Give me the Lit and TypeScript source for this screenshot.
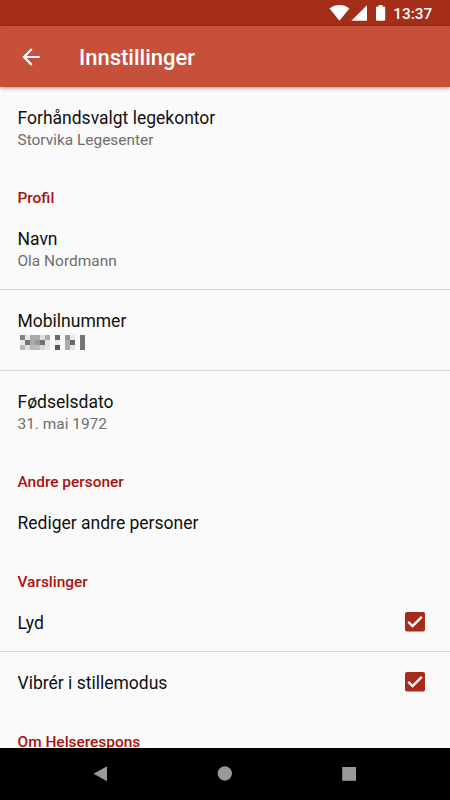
import { LitElement, html, css, svg, nothing } from "lit";
import { customElement } from "lit/decorators.js";

interface Item {
  kind: "row" | "category";
  title: string;
  summary?: string;
  checked?: boolean;
  masked?: boolean;
  divider?: boolean;
}

const items: Item[] = [
  { kind: "row", title: "Forhåndsvalgt legekontor", summary: "Storvika Legesenter" },
  { kind: "category", title: "Profil" },
  { kind: "row", title: "Navn", summary: "Ola Nordmann", divider: true },
  { kind: "row", title: "Mobilnummer", masked: true, divider: true },
  { kind: "row", title: "Fødselsdato", summary: "31. mai 1972" },
  { kind: "category", title: "Andre personer" },
  { kind: "row", title: "Rediger andre personer" },
  { kind: "category", title: "Varslinger" },
  { kind: "row", title: "Lyd", checked: true, divider: true },
  { kind: "row", title: "Vibrér i stillemodus", checked: true },
  { kind: "category", title: "Om Helserespons" },
];

// Grey levels of the masked phone number, three rows of 5px cells; -1 is empty.
const mosaic = [
  [132, 232, 168, 168, 222, 172, -1, 108, -1, 150, 232, -1, 116],
  [232, 116, 172, 150, 116, 228, -1, 236, -1, 172, 104, -1, 116],
  [184, 222, 184, 190, 216, 228, -1, 88, -1, 172, 228, -1, 116],
];

@customElement("app-root")
export class AppRoot extends LitElement {
  static styles = css`
    :host {
      display: flex;
      flex-direction: column;
      height: 800px;
      overflow: hidden;
      background: #fafafa;
      font-family: Roboto, sans-serif;
      -webkit-font-smoothing: antialiased;
    }
    svg {
      display: block;
    }
    .status {
      flex: none;
      height: 26px;
      background: #a52e1b;
    }
    .bar {
      flex: none;
      display: flex;
      align-items: center;
      height: 61px;
      background: #c7503b;
      color: #fff;
      box-shadow: 0 1px 4px rgba(0, 0, 0, 0.42);
      z-index: 1;
    }
    .back {
      margin-left: 18px;
    }
    .heading {
      margin: 2px 0 0 35px;
      font-size: 22px;
      line-height: 26px;
      font-weight: 500;
    }
    .list {
      flex: 1;
      min-height: 0;
      overflow: hidden;
      padding-top: 1px;
    }
    .row {
      box-sizing: border-box;
      display: flex;
      justify-content: space-between;
      height: 60px;
      padding: 20px 25px 0 17.5px;
    }
    .tall {
      height: 80px;
      padding-top: 19px;
    }
    .divider {
      border-bottom: 1px solid #d9d9d9;
    }
    .tall.divider {
      height: 81px;
    }
    .divider + .tall {
      padding-top: 20px;
    }
    .divider + .tall:not(.divider) {
      height: 81.2px;
    }
    .title {
      font-size: 17.5px;
      line-height: 22px;
      color: #111;
    }
    .summary {
      font-size: 15.45px;
      line-height: 23px;
      color: #6e6e6e;
    }
    .mosaic {
      margin: 3.4px 0 0 2.5px;
    }
    .category {
      box-sizing: border-box;
      height: 40.6px;
      padding: 20px 17.5px 0;
      font-size: 15.45px;
      line-height: 20px;
      font-weight: 500;
      color: #a6150f;
    }
    .row:not(.tall) + .category {
      height: 39.8px;
    }
    .nav {
      flex: none;
      height: 52px;
      background: #000;
    }
  `;

  private renderItem(item: Item) {
    if (item.kind === "category") {
      return html`<div class="category">${item.title}</div>`;
    }
    const tall = item.summary || item.masked ? "tall" : "";
    return html`
      <div class="row ${tall} ${item.divider ? "divider" : ""}">
        <div>
          <div class="title">${item.title}</div>
          ${item.summary ? html`<div class="summary">${item.summary}</div>` : nothing}
          ${item.masked ? this.renderMosaic() : nothing}
        </div>
        ${item.checked
          ? html`<svg width="20" height="20" viewBox="0 0 20 20">
              <rect width="20" height="19.5" rx="2" fill="#a82a1b" />
              <path d="M3.2 9.8 7.6 14 16.8 4.8" fill="none" stroke="#fff" stroke-width="2.4" />
            </svg>`
          : nothing}
      </div>
    `;
  }

  private renderMosaic() {
    return html`<svg class="mosaic" width="65" height="15" shape-rendering="crispEdges">
      ${mosaic.map((line, y) =>
        line.map((v, x) =>
          v < 0
            ? nothing
            : svg`<rect x=${x * 5} y=${y * 5} width="5" height="5" fill=${`rgb(${v},${v},${v})`} />`
        )
      )}
    </svg>`;
  }

  render() {
    return html`
      <svg class="status" width="450" height="26" viewBox="0 0 450 26">
        <g fill="#fff">
          <path d="M339.5 20.8 329.6 8.4C332.4 6.2 335.8 5 339.5 5s7.1 1.2 9.9 3.4Z" />
          <path d="M351.3 20.8 367 5.2V20.8Z" />
          <path d="M376 7.8a1.2 1.2 0 0 1 1.2-1.2h1.5V5h3.8v1.6h1.5a1.2 1.2 0 0 1 1.2 1.2v11.8a1.2 1.2 0 0 1-1.2 1.2h-6.8a1.2 1.2 0 0 1-1.2-1.2Z" />
          <text x="393.3" y="19.2" font-size="15.3" font-weight="500">13:37</text>
        </g>
      </svg>
      <header class="bar">
        <svg class="back" width="26" height="26" viewBox="0 0 24 24">
          <path fill="#fff" d="M20 11H7.83l5.59-5.59L12 4l-8 8 8 8 1.41-1.41L7.83 13H20z" />
        </svg>
        <div class="heading">Innstillinger</div>
      </header>
      <main class="list">${items.map((i) => this.renderItem(i))}</main>
      <svg class="nav" width="450" height="52" viewBox="0 0 450 52">
        <g fill="#999">
          <path d="M107 18.2V33.3L93.5 25.8Z" />
          <circle cx="224.8" cy="25.5" r="7.2" />
          <rect x="342.2" y="19" width="13.8" height="13.8" />
        </g>
      </svg>
    `;
  }
}
